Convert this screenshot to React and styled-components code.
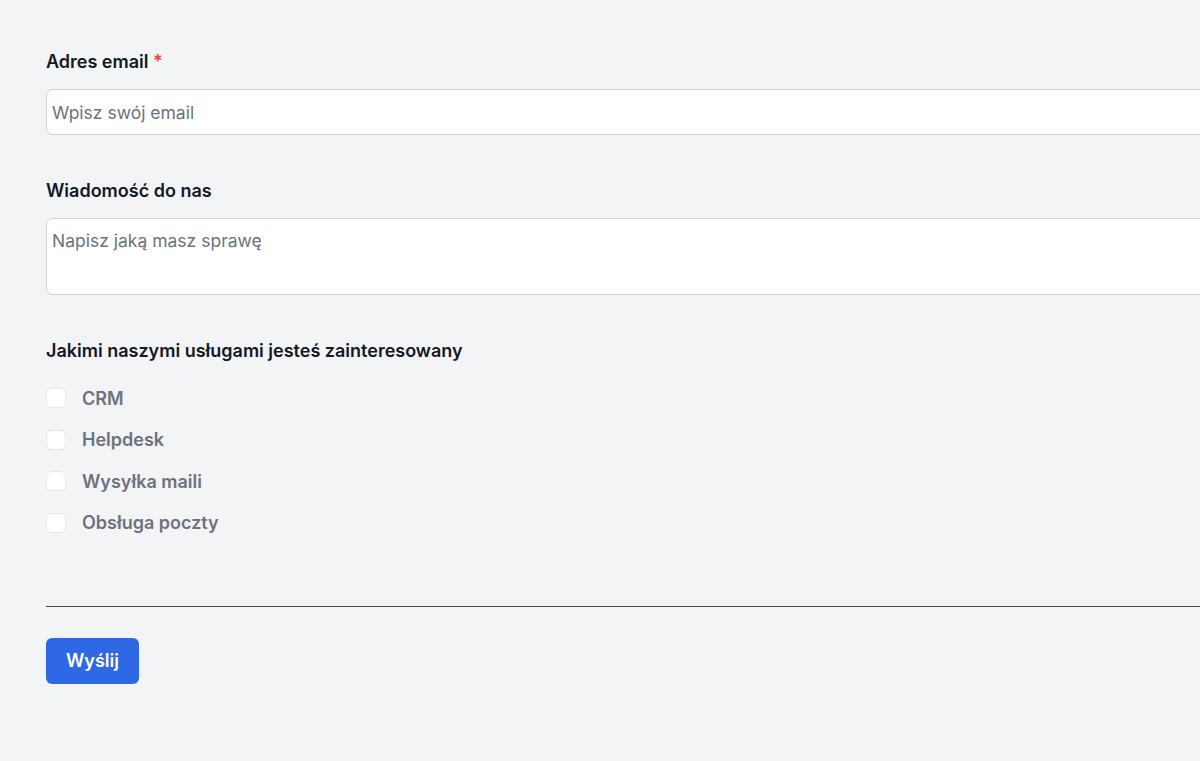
import React from 'react';
import styled, { createGlobalStyle } from 'styled-components';

const GlobalStyle = createGlobalStyle`
  html, body {
    margin: 0;
    padding: 0;
    background: #f3f4f6;
    overflow: hidden;
    font-family: Inter, "Noto Sans", sans-serif;
  }
`;

const services = ['CRM', 'Helpdesk', 'Wysyłka maili', 'Obsługa poczty'];

export default function App() {
  return (
    <>
      <GlobalStyle />
      <Form onSubmit={(e) => e.preventDefault()}>
        <Field>
          <Label htmlFor="email">
            Adres email <Required>*</Required>
          </Label>
          <TextInput id="email" type="email" placeholder="Wpisz swój email" />
        </Field>
        <Field>
          <Label htmlFor="message">Wiadomość do nas</Label>
          <TextArea id="message" placeholder="Napisz jaką masz sprawę" />
        </Field>
        <Field>
          <Label as="div">Jakimi naszymi usługami jesteś zainteresowany</Label>
          <CheckList>
            {services.map((name) => (
              <CheckRow key={name}>
                <Box type="checkbox" />
                <span>{name}</span>
              </CheckRow>
            ))}
          </CheckList>
        </Field>
        <Divider />
        <Submit type="submit">Wyślij</Submit>
      </Form>
    </>
  );
}

const Form = styled.form`
  width: 1300px;
  padding: 51px 0 0 46px;
  display: flex;
  flex-direction: column;
`;

const Field = styled.div`
  display: flex;
  flex-direction: column;
  margin-bottom: 45px;
`;

const Label = styled.label`
  font-size: 18px;
  font-weight: 600;
  line-height: 22px;
  color: #111827;
  margin-bottom: 16px;
`;

const Required = styled.span`
  color: #ef4444;
`;

const TextInput = styled.input`
  box-sizing: border-box;
  height: 46px;
  padding: 0 5px;
  border: 1px solid #d1d5db;
  border-radius: 6px;
  background: #fff;
  font-family: inherit;
  font-size: 17.5px;
  color: #111827;
  outline: none;
  &::placeholder {
    color: #6b7280;
  }
`;

const TextArea = styled(TextInput).attrs({ as: 'textarea' })`
  height: 77px;
  padding: 11px 5px;
  resize: none;
  line-height: 22px;
`;

const CheckList = styled.div`
  display: flex;
  flex-direction: column;
  gap: 21.5px;
  margin-top: 10px;
  margin-bottom: 28px;
`;

const CheckRow = styled.label`
  display: flex;
  align-items: center;
  gap: 16px;
  height: 20px;
  font-size: 18px;
  font-weight: 600;
  color: #6b7280;
`;

const Box = styled.input`
  appearance: none;
  margin: 0;
  width: 20px;
  height: 20px;
  border: 1px solid #e5e7eb;
  border-radius: 5px;
  background: #fff;
`;

const Divider = styled.hr`
  margin: 0 0 31px;
  border: none;
  border-top: 1px solid #4b4b4b;
`;

const Submit = styled.button`
  align-self: flex-start;
  height: 46px;
  padding: 0 20px;
  border: none;
  border-radius: 6px;
  background: #2f68e5;
  color: #fff;
  font-family: inherit;
  font-size: 18px;
  font-weight: 600;
`;
